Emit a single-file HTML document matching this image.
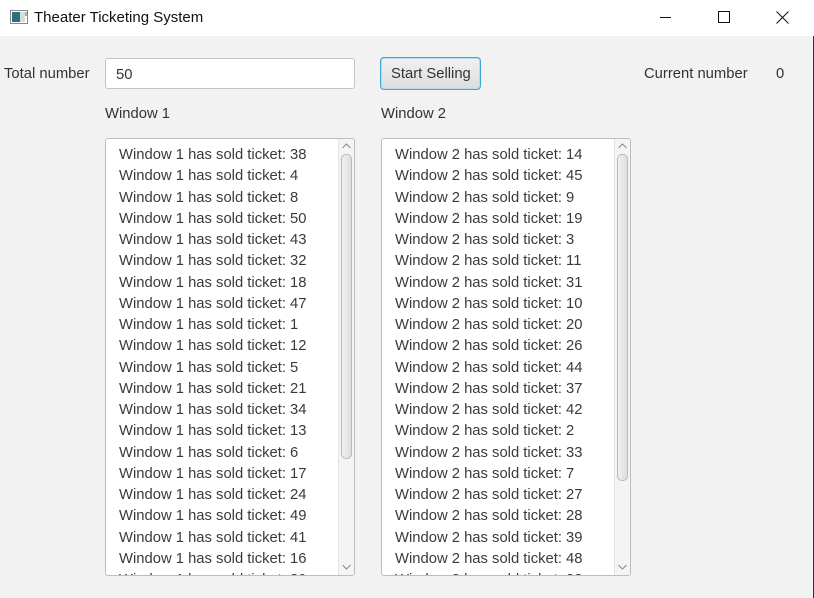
<!DOCTYPE html>
<html><head><style>
*{margin:0;padding:0;box-sizing:border-box}
body{width:814px;height:598px;background:#f2f2f2;font-family:"Liberation Sans",sans-serif;color:#333;position:relative;overflow:hidden;font-size:14px}
.tb{position:absolute;left:0;top:0;width:814px;height:36px;background:#fff}
.abs{position:absolute;white-space:nowrap}
.list{position:absolute;top:138px;width:250px;height:438px;background:#fff;border:1px solid #bdbdbd;border-radius:3px;overflow:hidden}
.list .items{position:absolute;left:13px;top:6px;line-height:21.25px;font-size:14.8px;color:#3a3a3a}
.sb{position:absolute;right:0;top:0;width:16px;height:100%;background:#f4f4f4;border-left:1px solid #e4e4e4}
.thumb{position:absolute;left:2px;top:15px;width:11px;height:305px;border:1px solid #b8b8b8;border-radius:5px;background:linear-gradient(90deg,#f0f0f0,#dedede)}
.arr{position:absolute;left:3px}
.lbl{font-size:14.8px}
</style></head><body>
<div class="tb">
<svg class="abs" style="left:10px;top:10px" width="18" height="14"><rect x="0.5" y="0.5" width="17" height="13" fill="#fff" stroke="#888"/><rect x="2" y="2" width="8" height="10" fill="#2f6f7a"/><rect x="10" y="2" width="5" height="10" fill="#cfe0d8"/><rect x="15.5" y="2" width="1" height="4" fill="#666"/></svg>
<div class="abs" style="left:34px;top:9px;font-size:15px;color:#111">Theater Ticketing System</div>
<div class="abs" style="left:660px;top:17px;width:11px;height:1px;background:#111"></div>
<div class="abs" style="left:718px;top:11px;width:12px;height:12px;border:1px solid #111"></div>
<svg class="abs" style="left:776px;top:11px" width="13" height="13"><path d="M0.5 0.5L12.5 12.5M12.5 0.5L0.5 12.5" stroke="#111" stroke-width="1"/></svg>
</div>
<div class="abs" style="right:0;top:36px;width:1px;height:562px;background:#333"></div>
<div class="abs lbl" style="left:4px;top:66px">Total number</div>
<div class="abs lbl" style="left:105px;top:58px;width:250px;height:31px;background:#fff;border:1px solid #c4c4c4;border-radius:3px;padding:8px 0 0 10px">50</div>
<div class="abs lbl" style="left:380px;top:57px;width:101px;height:33px;border:1px solid #3ba6d8;border-radius:4px;background:linear-gradient(#f2f2f2,#dcdcdc);box-shadow:inset 0 0 0 1px #b5dcef;padding:8px 0 0 10px">Start Selling</div>
<div class="abs lbl" style="left:644px;top:66px">Current number</div>
<div class="abs lbl" style="left:776px;top:66px">0</div>
<div class="abs lbl" style="left:105px;top:106px">Window 1</div>
<div class="abs lbl" style="left:381px;top:106px">Window 2</div>
<div class="list" style="left:105px"><div class="items">
Window 1 has sold ticket: 38<br>Window 1 has sold ticket: 4<br>Window 1 has sold ticket: 8<br>Window 1 has sold ticket: 50<br>Window 1 has sold ticket: 43<br>Window 1 has sold ticket: 32<br>Window 1 has sold ticket: 18<br>Window 1 has sold ticket: 47<br>Window 1 has sold ticket: 1<br>Window 1 has sold ticket: 12<br>Window 1 has sold ticket: 5<br>Window 1 has sold ticket: 21<br>Window 1 has sold ticket: 34<br>Window 1 has sold ticket: 13<br>Window 1 has sold ticket: 6<br>Window 1 has sold ticket: 17<br>Window 1 has sold ticket: 24<br>Window 1 has sold ticket: 49<br>Window 1 has sold ticket: 41<br>Window 1 has sold ticket: 16<br>Window 1 has sold ticket: 30</div>
<div class="sb"><svg class="arr" style="top:4px" width="9" height="6"><path d="M0.5 5L4.5 1L8.5 5" fill="none" stroke="#888"/></svg><div class="thumb"></div><svg class="arr" style="bottom:5px" width="9" height="6"><path d="M0.5 1L4.5 5L8.5 1" fill="none" stroke="#888"/></svg></div></div>
<div class="list" style="left:381px"><div class="items">
Window 2 has sold ticket: 14<br>Window 2 has sold ticket: 45<br>Window 2 has sold ticket: 9<br>Window 2 has sold ticket: 19<br>Window 2 has sold ticket: 3<br>Window 2 has sold ticket: 11<br>Window 2 has sold ticket: 31<br>Window 2 has sold ticket: 10<br>Window 2 has sold ticket: 20<br>Window 2 has sold ticket: 26<br>Window 2 has sold ticket: 44<br>Window 2 has sold ticket: 37<br>Window 2 has sold ticket: 42<br>Window 2 has sold ticket: 2<br>Window 2 has sold ticket: 33<br>Window 2 has sold ticket: 7<br>Window 2 has sold ticket: 27<br>Window 2 has sold ticket: 28<br>Window 2 has sold ticket: 39<br>Window 2 has sold ticket: 48<br>Window 2 has sold ticket: 22</div>
<div class="sb"><svg class="arr" style="top:4px" width="9" height="6"><path d="M0.5 5L4.5 1L8.5 5" fill="none" stroke="#888"/></svg><div class="thumb" style="height:327px"></div><svg class="arr" style="bottom:5px" width="9" height="6"><path d="M0.5 1L4.5 5L8.5 1" fill="none" stroke="#888"/></svg></div></div>
</body></html>
